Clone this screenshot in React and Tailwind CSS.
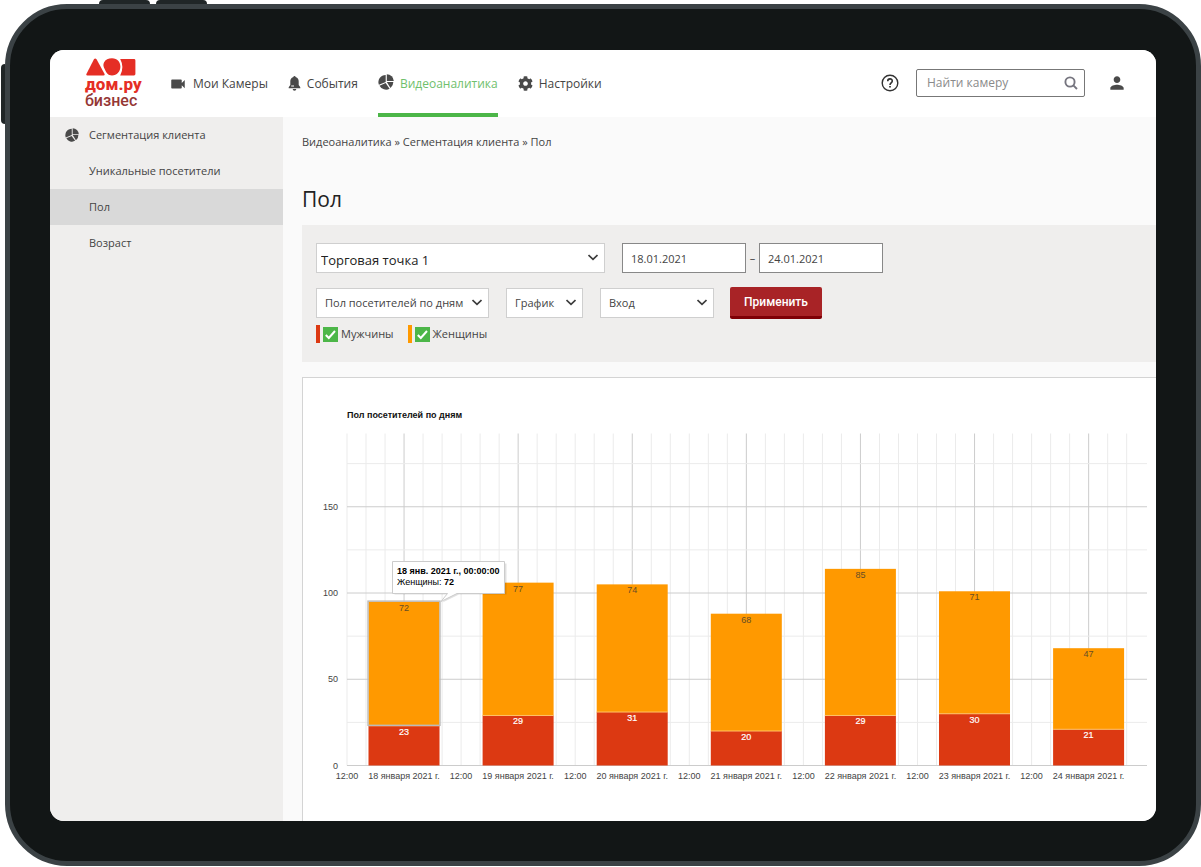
import { MdVideocam, MdPerson } from "react-icons/md";
import { FaCog } from "react-icons/fa";

const DAYS = [
  { label: "18 января 2021 г.", men: 23, women: 72 },
  { label: "19 января 2021 г.", men: 29, women: 77 },
  { label: "20 января 2021 г.", men: 31, women: 74 },
  { label: "21 января 2021 г.", men: 20, women: 68 },
  { label: "22 января 2021 г.", men: 29, women: 85 },
  { label: "23 января 2021 г.", men: 30, women: 71 },
  { label: "24 января 2021 г.", men: 21, women: 47 },
];

function PieIcon({ size }) {
  return (
    <svg width={size} height={size} viewBox="0 0 16 16" fill="currentColor" aria-hidden="true" className="shrink-0">
      <path d="M8.8 0.2 A7 7 0 0 1 15.8 7 L8.8 7 Z" />
      <path d="M7.7 1 L7.7 8 L0.9 10.8 A7.2 7.2 0 0 1 7.7 1 Z" />
      <path d="M7.6 9.1 L11.6 14.7 A7.4 7.4 0 0 1 1.5 11.7 Z" />
      <path d="M8.8 8.1 L15.3 8.1 A7.2 7.2 0 0 1 12.5 14 Z" />
    </svg>
  );
}

function BellIcon() {
  return (
    <svg width="13" height="15" viewBox="0 0 13 15" fill="currentColor" aria-hidden="true" className="shrink-0">
      <path d="M5.4 1.1 A1.1 1.1 0 0 1 7.6 1.1 C9.9 1.7 10.7 3.5 10.7 5.6 V9 L12.3 11.2 V12.2 H0.7 V11.2 L2.3 9 V5.6 C2.3 3.5 3.1 1.7 5.4 1.1 Z" />
      <path d="M4.7 12.9 H8.3 A1.8 1.8 0 0 1 4.7 12.9 Z" />
      <path d="M3.2 10 H6" stroke="#fff" strokeWidth="1" />
    </svg>
  );
}

function Logo() {
  return (
    <a href="#" className="flex w-[84px] shrink-0 flex-col text-[#e52e25]">
      <svg width="50" height="18" viewBox="0 0 50 18" fill="currentColor" aria-hidden="true" className="ml-px">
        <path d="M8.1 1.1 Q9.3 -0.3 10.4 1.1 L18.6 15.9 Q19 17.4 17.4 17.5 H1.4 Q-0.1 17.4 0.4 15.9 Z" />
        <path d="M26 0.2 C31.5 0.2 34.4 4 34.4 8.6 C34.4 13.6 31 17.5 26 17.5 C21.8 17.5 20.6 15 19 11.8 C17.2 8.4 17 6.6 18 4.4 C19.4 1.6 22.4 0.2 26 0.2 Z" />
        <path d="M34.2 1 H48 Q49.4 1 49.4 2.4 V16 Q49.4 17.4 48 17.4 H34.2 Q38.6 9.2 34.2 1 Z" />
      </svg>
      <span className="font-[Roboto,sans-serif] text-[17px]/[17px] font-extrabold">дом.ру</span>
      <span className="font-[Roboto,sans-serif] text-[16px]/[16px] font-medium text-[#953735]">бизнес</span>
    </a>
  );
}

function NavItem({ icon, label, active }) {
  return (
    <a
      href="#"
      aria-current={active ? "page" : undefined}
      className={
        active
          ? "flex h-full items-center gap-1.5 border-b-4 border-[#4cb648] pt-1 text-[#6fc06c]"
          : "flex h-full items-center gap-1.5 border-b-4 border-transparent pt-1"
      }
    >
      <span className={active ? "pb-1 text-[#4a4a4a]" : "text-[#4a4a4a]"}>{icon}</span>
      {label}
    </a>
  );
}

function Chevron() {
  return (
    <svg width="10" height="7" viewBox="0 0 10 7" fill="none" stroke="#3c3c3c" strokeWidth="1.7" aria-hidden="true" className="pointer-events-none absolute top-[11px] right-[7px]">
      <path d="M0.5 1 L5 5.3 L9.5 1" />
    </svg>
  );
}

function Select({ label, value, width, text }) {
  return (
    <div className={"relative " + width}>
      <select
        aria-label={label}
        defaultValue={value}
        className={"h-[30px] w-full appearance-none border border-[#cfcfcf] bg-white outline-none " + text}
      >
        <option>{value}</option>
      </select>
      <Chevron />
    </div>
  );
}

function Legend({ id, label, color }) {
  return (
    <label htmlFor={id} className="flex items-center gap-[3px]">
      <span className={"h-[18px] w-1 " + color} />
      <span className="relative flex">
        <input id={id} type="checkbox" defaultChecked className="peer size-[15px] appearance-none border border-[#4cb648] bg-white checked:bg-[#4cb648]" />
        <svg width="15" height="15" viewBox="0 0 15 15" fill="none" stroke="#fff" strokeWidth="2" aria-hidden="true" className="pointer-events-none absolute inset-0 hidden peer-checked:block">
          <path d="M2.8 8 L5.8 11 L12 4" />
        </svg>
      </span>
      {label}
    </label>
  );
}

const LEFT = 44;
const BASE = 387.5;
const UNIT = 1.725;
const STEP = 114.1;
const TOP = 55.5;
const RIGHT = 844;

function Chart() {
  const cols = Array.from({ length: 42 }, (_, i) => i);
  return (
    <svg viewBox="0 0 853 443" className="block w-full font-[Liberation_Sans,Arial,sans-serif] text-[9px]" role="img" aria-label="Пол посетителей по дням">
      <text x={LEFT} y="40" fontWeight="700" fill="#111">Пол посетителей по дням</text>
      {cols.map((i) => {
        const x = LEFT + (i * STEP) / 6;
        const major = i % 6 === 3;
        return <line key={i} x1={x} x2={x} y1={TOP} y2={BASE} stroke={major ? "#ccc" : "#ebebeb"} />;
      })}
      {[25, 75, 125, 175].map((v) => (
        <line key={v} x1={LEFT} x2={RIGHT} y1={BASE - v * UNIT} y2={BASE - v * UNIT} stroke="#ebebeb" />
      ))}
      {[0, 50, 100, 150].map((v) => (
        <g key={v}>
          <line x1={LEFT} x2={RIGHT} y1={BASE - v * UNIT} y2={BASE - v * UNIT} stroke="#ccc" />
          <text x="35" y={BASE - v * UNIT + 3} textAnchor="end" fill="#444">{v}</text>
        </g>
      ))}
      {DAYS.map((d, i) => {
        const cx = LEFT + 57 + i * STEP;
        const menTop = BASE - d.men * UNIT;
        const top = BASE - (d.men + d.women) * UNIT;
        return (
          <g key={d.label} textAnchor="middle">
            <rect x={cx - 35.5} y={top} width="71" height={menTop - top} fill="#ff9900" />
            <rect x={cx - 35.5} y={menTop} width="71" height={BASE - menTop} fill="#dc3912" />
            <line x1={cx - 35.5} x2={cx + 35.5} y1={menTop} y2={menTop} stroke="#ffc266" />
            {i === 0 && <rect x={cx - 36} y={top - 0.5} width="72" height={menTop - top} fill="none" stroke="#bbb" strokeWidth="1.4" />}
            <text x={cx} y={top + 9} fill="#664d26">{d.women}</text>
            <text x={cx} y={menTop + 9} fill="#fff" stroke="#fff" strokeWidth="0.2">{d.men}</text>
            <text x={cx - 57} y="401" fill="#444">12:00</text>
            <text x={cx} y="401" fill="#444">{d.label}</text>
          </g>
        );
      })}
      <path d="M90.5 184.5 H202.5 V215.5 H155 L138.5 223.5 L145 215.5 H90.5 Z" fill="#000" opacity="0.12" transform="translate(1 1)" />
      <path d="M89.5 183.5 H201.5 V215.5 H154 L138 223.5 L144.5 215.5 H89.5 Z" fill="#fff" stroke="#ccc" />
      <text x="94" y="196" fontWeight="700" fill="#000">18 янв. 2021 г., 00:00:00</text>
      <text x="94" y="207" fill="#000">
        Женщины: <tspan fontWeight="700">72</tspan>
      </text>
    </svg>
  );
}

const SIDE = ["Уникальные посетители", "Пол", "Возраст"];

export default function App() {
  return (
    <div className="relative flex min-h-screen bg-white pt-1 pb-px pl-[5px] font-[Open_Sans,Noto_Sans,sans-serif] text-[#444]">
      <div className="absolute top-0 left-[99px] h-1 w-[51px] rounded-t-sm bg-[#202627]" />
      <div className="absolute top-0 left-[156px] h-1 w-[51px] rounded-t-sm bg-[#202627]" />
      <div className="absolute top-16 left-px h-[60px] w-1 rounded-l-sm bg-[#202627]" />
      <div className="flex min-w-0 flex-1 rounded-[62px] border-[5px] border-[#3b4245] bg-[#121616] px-10 pt-[41px] pb-10">
        <div className="flex min-w-0 flex-1 flex-col overflow-hidden rounded-[14px] bg-[#fafafa]">
          <header className="flex h-[67px] items-center bg-white pr-[29px] pl-[35px] text-[12px]">
            <Logo />
            <nav className="flex h-full items-center gap-5">
              <NavItem icon={<MdVideocam size={18} />} label="Мои Камеры" />
              <NavItem icon={<BellIcon />} label="События" />
              <NavItem icon={<PieIcon size={16} />} label="Видеоаналитика" active />
              <NavItem icon={<FaCog size={15} />} label="Настройки" />
            </nav>
            <div className="ml-auto flex items-center pb-0.5">
              <button type="button" aria-label="Помощь">
                <svg width="18" height="18" viewBox="0 0 18 18" fill="none" stroke="#333" strokeWidth="1.4" aria-hidden="true">
                  <circle cx="9" cy="9" r="7.8" />
                  <path d="M6.7 7.2 C6.7 4.1 11.3 4.1 11.3 7 C11.3 8.9 9 8.9 9 10.9" strokeWidth="1.6" />
                  <path d="M9 11.9 V13.5" strokeWidth="1.7" />
                </svg>
              </button>
              <div className="relative ml-[17px]">
                <input aria-label="Найти камеру" placeholder="Найти камеру" className="block h-7 w-[169px] rounded-[2px] border border-[#777] bg-white pl-2.5 outline-none placeholder:text-[#8a8a8a]" />
                <svg width="14" height="14" viewBox="0 0 14 14" fill="none" stroke="#76757f" strokeWidth="1.9" aria-hidden="true" className="absolute top-[7px] right-[7px]">
                  <circle cx="6" cy="6" r="4.6" />
                  <path d="M9.3 9.3 L13 13" />
                </svg>
              </div>
              <button type="button" aria-label="Профиль" className="ml-[22px] text-[#4a4a4a]">
                <MdPerson size={20} />
              </button>
            </div>
          </header>
          <div className="flex flex-1">
            <aside className="w-[233px] shrink-0 bg-[#efeeed] text-[11px]">
              <a href="#" className="flex h-9 items-center gap-2.5 pl-[15px]">
                <span className="text-[#4a4a4a]"><PieIcon size={14} /></span>
                Сегментация клиента
              </a>
              {SIDE.map((s) => (
                <a key={s} href="#" className={s === "Пол" ? "flex h-9 items-center bg-[#d9d9d9] pl-[39px]" : "flex h-9 items-center pl-[39px]"}>
                  {s}
                </a>
              ))}
            </aside>
            <main className="flex min-w-0 flex-1 flex-col pl-[19px]">
              <p className="pt-[17px] text-[11px]/[16px]">
                <a href="#">Видеоаналитика</a> » <a href="#">Сегментация клиента</a> » Пол
              </p>
              <h1 className="pt-[34px] text-[21px]/[30px] text-[#222]">Пол</h1>
              <form className="mt-[11px] flex h-[137px] flex-col bg-[#efeeed] pt-[18px] pl-3.5 text-[11px]">
                <div className="flex items-center">
                  <Select label="Торговая точка" value="Торговая точка 1" width="w-[289px]" text="pt-1.5 pl-1 text-[13px] text-[#222]" />
                  <input aria-label="Дата начала" defaultValue="18.01.2021" className="ml-[17px] h-[30px] w-[124px] border border-[#888] bg-white pl-2 outline-none" />
                  <span className="w-[13px] text-center">–</span>
                  <input aria-label="Дата окончания" defaultValue="24.01.2021" className="h-[30px] w-[124px] border border-[#888] bg-white pl-2 outline-none" />
                </div>
                <div className="mt-3.5 flex items-center">
                  <Select label="Отчёт" value="Пол посетителей по дням" width="w-[173px]" text="pl-2" />
                  <div className="w-[17px]" />
                  <Select label="Вид" value="График" width="w-[77px]" text="pl-2" />
                  <div className="w-[17px]" />
                  <Select label="Направление" value="Вход" width="w-[114px]" text="pl-2" />
                  <button type="button" className="ml-4 h-8 w-[92px] rounded-[2px] border-b-[3px] border-[#7f0006] bg-[#a82326] font-[Roboto,sans-serif] text-[12px] font-medium text-white">
                    Применить
                  </button>
                </div>
                <div className="mt-1.5 flex gap-3.5">
                  <Legend id="men" label="Мужчины" color="bg-[#dc3912]" />
                  <Legend id="women" label="Женщины" color="bg-[#ff9900]" />
                </div>
              </form>
              <section className="mt-[15px] flex-1 border-t border-l border-[#d4d4d4] bg-white">
                <Chart />
              </section>
            </main>
          </div>
        </div>
      </div>
    </div>
  );
}
